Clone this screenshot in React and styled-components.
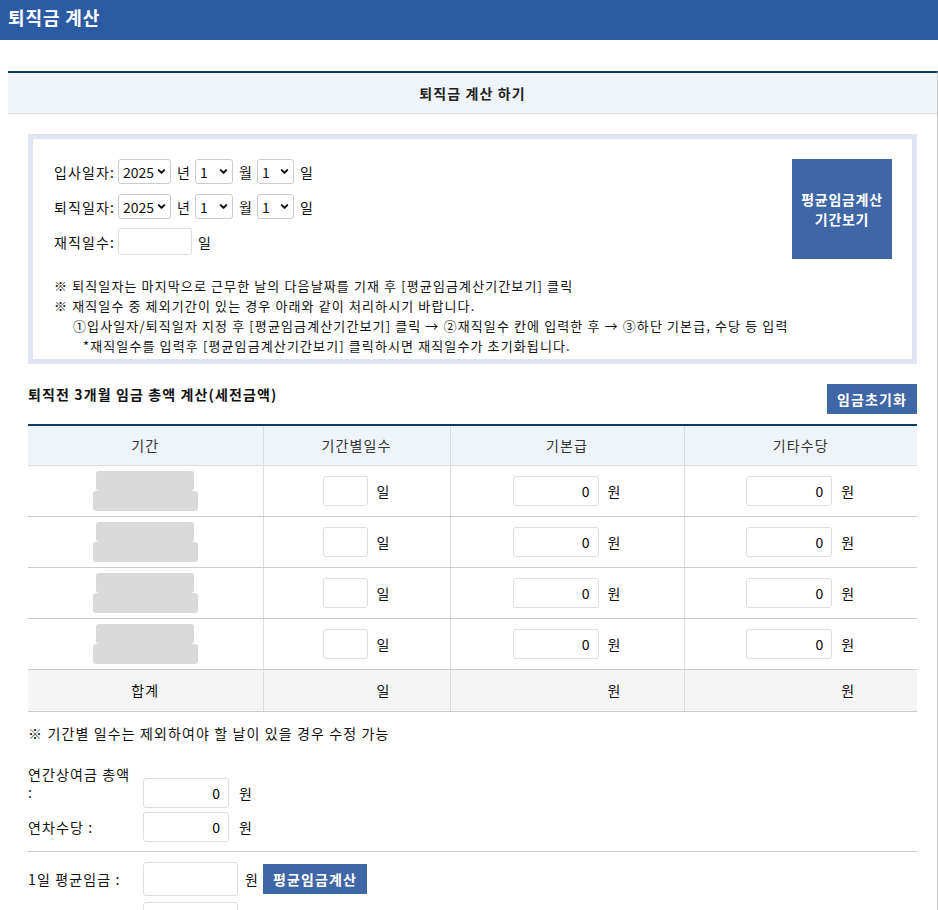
import React from "react";
import styled, { createGlobalStyle } from "styled-components";
import { ChevronDown } from "lucide-react";

const GlobalStyle = createGlobalStyle`
  body {
    margin: 0;
    font-family: "Noto Sans CJK KR", "Noto Sans", sans-serif;
    font-size: 14px;
    letter-spacing: 0.08em;
    color: #111;
    background: #fff;
  }
  * { box-sizing: border-box; }
`;

const TopBar = styled.header`
  height: 40px;
  background: #2a5ba3;
  color: #fff;
  font-size: 18px;
  font-weight: 700;
  letter-spacing: 0.05em;
  padding: 0 8px 6px;
  display: flex;
  align-items: center;
`;

const Page = styled.div`
  margin: 31px 0 0 8px;
  border-top: 2px solid #0d3b6e;
  border-right: 1px solid #ccc;
`;

const TitleBar = styled.div`
  height: 41px;
  background: #eff3fa;
  border-bottom: 1px solid #ddd;
  display: flex;
  align-items: center;
  justify-content: center;
  font-weight: 700;
  font-size: 14px;
  color: #222;
`;

const Body = styled.div`
  padding: 20px 20px 0 20px;
`;

const InputBox = styled.div`
  border: 5px solid #e0e4f0;
  padding: 15px 20px 3px 21px;
  display: grid;
  grid-template-columns: 1fr 100px;
`;

const FormCol = styled.div`
  display: flex;
  flex-direction: column;
`;

const FormRow = styled.div`
  display: flex;
  align-items: center;
  height: 35px;
`;

const Label = styled.span`
  margin-right: 3px;
`;

const SelectWrap = styled.span`
  position: relative;
  display: inline-flex;
  width: ${(p) => p.$w}px;
  height: 25px;
  svg {
    position: absolute;
    right: 4px;
    top: 7px;
    pointer-events: none;
  }
`;

const Select = styled.select`
  appearance: none;
  width: 100%;
  height: 100%;
  border: 1px solid #ccc;
  border-radius: 3px;
  font-family: inherit;
  font-size: 14px;
  letter-spacing: 0;
  background: #fff;
  color: #111;
  padding: 0 0 0 4px;
`;

const Unit = styled.span`
  margin: 0 4px 0 6px;
`;

const TextInput = styled.input`
  width: ${(p) => p.$w}px;
  height: ${(p) => p.$h || 30}px;
  border: 1px solid #ddd;
  border-radius: 3px;
  font-family: inherit;
  font-size: 14px;
  letter-spacing: 0;
  text-align: right;
  padding: 0 8px;
  flex-shrink: 0;
`;

const Notes = styled.div`
  grid-column: 1 / -1;
  margin-top: 17px;
  font-size: 13px;
  line-height: 20px;
  color: #111;
`;

const Indent = styled.div`
  padding-left: ${(p) => p.$pl}px;
`;

const BigButton = styled.button`
  width: 100px;
  height: 100px;
  margin-top: 5px;
  background: #3f67a6;
  color: #fff;
  border: 0;
  font-family: inherit;
  font-size: 14px;
  font-weight: 700;
  letter-spacing: 0.05em;
  line-height: 20px;
  padding: 0;
`;

const SectionHead = styled.div`
  display: flex;
  justify-content: space-between;
  align-items: flex-start;
  margin-top: 20px;
  height: 40px;
`;

const SectionTitle = styled.h3`
  margin: 0;
  font-size: 14px;
  font-weight: 700;
  line-height: 20px;
`;

const BlueButton = styled.button`
  height: 30px;
  padding: 0 10px;
  background: #3f67a6;
  color: #fff;
  border: 0;
  font-family: inherit;
  font-size: 14px;
  font-weight: 700;
  letter-spacing: 0.08em;
`;

const Table = styled.table`
  width: 100%;
  border-collapse: collapse;
  border-top: 2px solid #0d3b6e;
  table-layout: fixed;
`;

const Th = styled.th`
  height: 40px;
  background: #eff3fa;
  font-weight: 400;
  color: #333;
  border-left: 1px solid #ddd;
  border-bottom: 1px solid #ddd;
  &:first-child { border-left: 0; }
`;

const Td = styled.td`
  height: 51px;
  text-align: center;
  border-left: 1px solid #ddd;
  border-bottom: 1px solid #ccc;
  &:first-child { border-left: 0; }
`;

const SumTd = styled.td`
  height: 42px;
  text-align: center;
  background: #f5f5f5;
  border-left: 1px solid #ddd;
  border-top: 1px solid #0d3b6e;
  border-bottom: 1px solid #ccc;
  &:first-child { border-left: 0; }
`;

const Cell = styled.div`
  display: flex;
  align-items: center;
  justify-content: center;
  gap: 9px;
`;

const Spacer = styled.span`
  display: inline-block;
  width: ${(p) => p.$w}px;
`;

const Masked = styled.div`
  display: flex;
  flex-direction: column;
  align-items: center;
`;

const MaskBar = styled.div`
  width: ${(p) => p.$w}px;
  height: 20px;
  background: #dadada;
  border-radius: 3px;
`;

const Hint = styled.p`
  margin: 11px 0 0;
  line-height: 20px;
`;

const ExtraRow = styled.div`
  display: flex;
  align-items: ${(p) => p.$align || "center"};
  margin-top: ${(p) => p.$mt || 0}px;
`;

const ExtraLabel = styled.div`
  width: 115px;
  padding-right: 12px;
  line-height: 18px;
  flex-shrink: 0;
`;

const Field = styled.div`
  display: flex;
  align-items: center;
  margin-top: ${(p) => p.$mt || 0}px;
  gap: ${(p) => p.$gap || 10}px;
`;

const Rule = styled.hr`
  border: 0;
  border-top: 1px solid #ccc;
  margin: 9px 0 10px;
`;

const SmallBlue = styled(BlueButton)`
  margin-left: -3px;
  width: 104px;
  padding: 0;
`;

const periods = [0, 1, 2, 3];

function DateSelect({ w, value }) {
  return (
    <SelectWrap $w={w}>
      <Select defaultValue={value}>
        <option>{value}</option>
      </Select>
      <ChevronDown size={11} strokeWidth={4.5} color="#111" />
    </SelectWrap>
  );
}

function DateRow({ label }) {
  return (
    <FormRow>
      <Label>{label}</Label>
      <DateSelect w={53} value="2025" />
      <Unit>년</Unit>
      <DateSelect w={38} value="1" />
      <Unit>월</Unit>
      <DateSelect w={37} value="1" />
      <Unit>일</Unit>
    </FormRow>
  );
}

export default function App() {
  return (
    <>
      <GlobalStyle />
      <TopBar>퇴직금 계산</TopBar>
      <Page>
        <TitleBar>퇴직금 계산 하기</TitleBar>
        <Body>
          <InputBox>
            <FormCol>
              <DateRow label="입사일자:" />
              <DateRow label="퇴직일자:" />
              <FormRow>
                <Label>재직일수:</Label>
                <TextInput $w={74} $h={27} />
                <Unit>일</Unit>
              </FormRow>
            </FormCol>
            <BigButton>평균임금계산<br />기간보기</BigButton>
            <Notes>
              <div>※ 퇴직일자는 마지막으로 근무한 날의 다음날짜를 기재 후 [평균임금계산기간보기] 클릭</div>
              <div>※ 재직일수 중 제외기간이 있는 경우 아래와 같이 처리하시기 바랍니다.</div>
              <Indent $pl={19}>①입사일자/퇴직일자 지정 후 [평균임금계산기간보기] 클릭 → ②재직일수 칸에 입력한 후 → ③하단 기본급, 수당 등 입력</Indent>
              <Indent $pl={29}>*재직일수를 입력후 [평균임금계산기간보기] 클릭하시면 재직일수가 초기화됩니다.</Indent>
            </Notes>
          </InputBox>

          <SectionHead>
            <SectionTitle>퇴직전 3개월 임금 총액 계산(세전금액)</SectionTitle>
            <BlueButton>임금초기화</BlueButton>
          </SectionHead>

          <Table>
            <colgroup>
              <col style={{ width: 235 }} />
              <col style={{ width: 187 }} />
              <col style={{ width: 234 }} />
              <col style={{ width: 233 }} />
            </colgroup>
            <thead>
              <tr>
                <Th>기간</Th>
                <Th>기간별일수</Th>
                <Th>기본급</Th>
                <Th>기타수당</Th>
              </tr>
            </thead>
            <tbody>
              {periods.map((i) => (
                <tr key={i}>
                  <Td>
                    <Masked>
                      <MaskBar $w={98} />
                      <MaskBar $w={105} />
                    </Masked>
                  </Td>
                  <Td>
                    <Cell><TextInput $w={45} /><span>일</span></Cell>
                  </Td>
                  <Td>
                    <Cell><TextInput $w={86} defaultValue="0" /><span>원</span></Cell>
                  </Td>
                  <Td>
                    <Cell><TextInput $w={86} defaultValue="0" /><span>원</span></Cell>
                  </Td>
                </tr>
              ))}
              <tr>
                <SumTd>합계</SumTd>
                <SumTd><Cell><Spacer $w={45} /><span>일</span></Cell></SumTd>
                <SumTd><Cell><Spacer $w={86} /><span>원</span></Cell></SumTd>
                <SumTd><Cell><Spacer $w={86} /><span>원</span></Cell></SumTd>
              </tr>
            </tbody>
          </Table>

          <Hint>※ 기간별 일수는 제외하여야 할 날이 있을 경우 수정 가능</Hint>

          <ExtraRow $mt={22} $align="flex-start">
            <ExtraLabel>연간상여금 총액 :</ExtraLabel>
            <Field $mt={13}>
              <TextInput $w={86} defaultValue="0" />
              <span>원</span>
            </Field>
          </ExtraRow>
          <ExtraRow $mt={4}>
            <ExtraLabel>연차수당 :</ExtraLabel>
            <Field>
              <TextInput $w={86} defaultValue="0" />
              <span>원</span>
            </Field>
          </ExtraRow>
          <Rule />
          <ExtraRow>
            <ExtraLabel>1일 평균임금 :</ExtraLabel>
            <Field $gap={7}>
              <TextInput $w={95} $h={34} />
              <span>원</span>
              <SmallBlue>평균임금계산</SmallBlue>
            </Field>
          </ExtraRow>
          <ExtraRow $mt={6}>
            <ExtraLabel />
            <TextInput $w={95} $h={34} />
          </ExtraRow>
        </Body>
      </Page>
    </>
  );
}
